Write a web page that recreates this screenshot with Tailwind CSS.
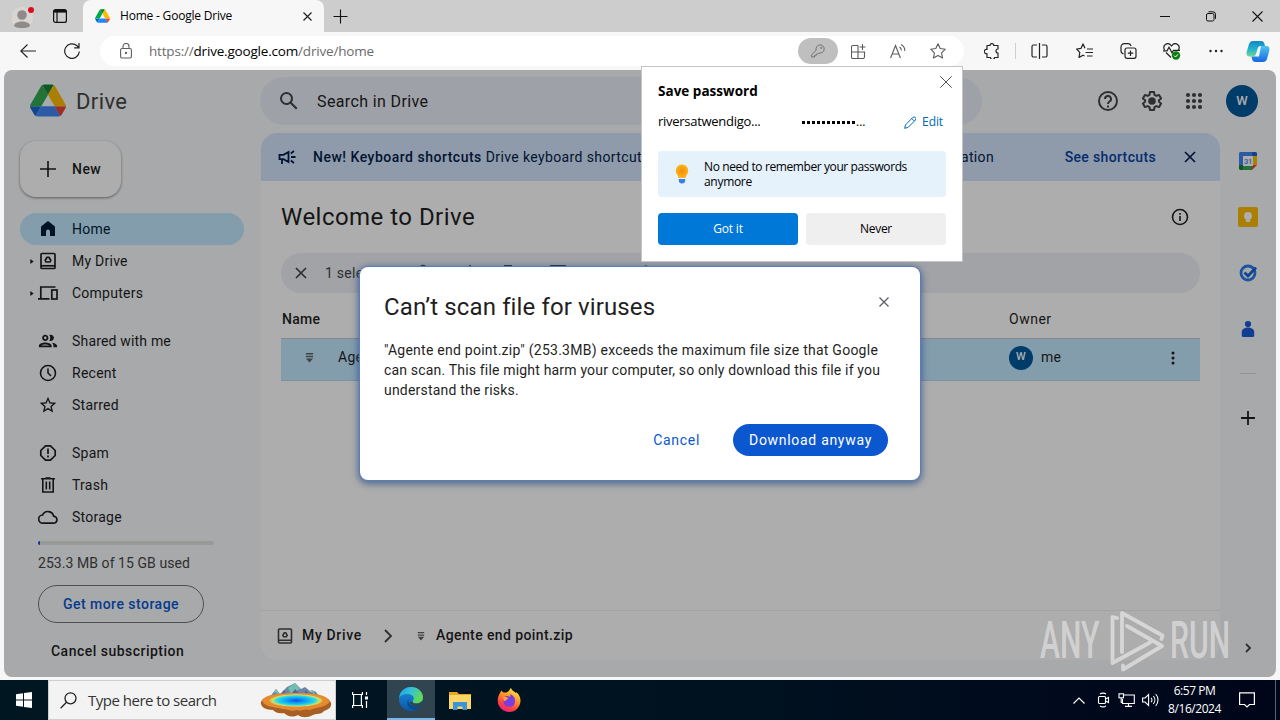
<!DOCTYPE html>
<html lang="en">
<head>
    <meta charset="UTF-8">
    <meta name="viewport" content="width=device-width, initial-scale=1.0">
    <title>Home - Google Drive</title>
    <script src="https://cdn.jsdelivr.net/npm/@tailwindcss/browser@4"></script>
</head>
<body class="w-[1280px] h-[720px] overflow-hidden relative flex flex-col bg-[#f7f7f7] text-[#1f1f1f] font-['Open_Sans',sans-serif] whitespace-nowrap">

    <!-- Tab strip -->
    <div class="h-8 shrink-0 bg-[#cdcdcd] flex items-stretch">
        <div class="w-[83px] flex items-center pl-3 gap-[26px]">
            <svg class="w-6 h-7 shrink-0" viewBox="0 0 24 28" fill="none">
                <circle cx="10" cy="16" r="11" fill="#d8d5d3"/>
                <circle cx="10" cy="13" r="4.8" fill="#8f8b88"/>
                <path d="M2 24c0-6 16-6 16 0-3 3-13 3-16 0z" fill="#8f8b88"/>
                <circle cx="19" cy="8" r="3" fill="#e00b1c"/>
            </svg>
            <svg class="w-4 h-4 shrink-0 -ml-[10px]" viewBox="0 0 16 16" fill="none" stroke="#111" stroke-width="1.2">
                <rect x="1.6" y="1.6" width="12.8" height="12.8" rx="2"/>
                <path d="M1.6 3.3h12.8" stroke-width="2.6"/>
                <path d="M5 4v10" stroke-width="1.2"/>
            </svg>
        </div>
        <div class="w-[241px] bg-[#f7f7f7] rounded-t-lg flex items-center pl-3 pr-[12px]">
            <svg class="w-[15px] h-[14px]" viewBox="0 0 87.3 78">
                <path d="m6.6 66.85 3.85 6.65c.8 1.4 1.95 2.5 3.3 3.3l13.75-23.8h-27.5c0 1.55.4 3.1 1.2 4.5z" fill="#0066da"/>
                <path d="m43.65 25-13.75-23.8c-1.35.8-2.5 1.9-3.3 3.3l-25.4 44a9.06 9.06 0 0 0-1.2 4.5h27.5z" fill="#00ac47"/>
                <path d="m73.55 76.8c1.35-.8 2.5-1.9 3.3-3.3l1.6-2.75 7.65-13.25c.8-1.4 1.2-2.95 1.2-4.5h-27.5l5.85 11.5z" fill="#ea4335"/>
                <path d="m43.65 25 13.75-23.8c-1.35-.8-2.9-1.2-4.5-1.2h-18.5c-1.6 0-3.15.45-4.5 1.2z" fill="#00832d"/>
                <path d="m59.8 53h-32.3l-13.75 23.8c1.35.8 2.9 1.2 4.5 1.2h50.8c1.6 0 3.15-.45 4.5-1.2z" fill="#2684fc"/>
                <path d="m73.4 26.5-12.7-22c-.8-1.4-1.95-2.5-3.3-3.3l-13.75 23.8 16.15 28h27.45c0-1.55-.4-3.1-1.2-4.5z" fill="#ffba00"/>
            </svg>
            <span class="ml-[10px] text-[12px] tracking-[-0.2px] text-black">Home - Google Drive</span>
            <svg class="w-[9px] h-[9px] ml-auto" viewBox="0 0 9 9" stroke="#222" stroke-width="1.2"><path d="M.5.5l8 8M8.500.5l-8 8"/></svg>
        </div>
        <div class="flex items-center pl-[9px]">
            <svg class="w-[15px] h-[15px]" viewBox="0 0 15 15" stroke="#111" stroke-width="1.1"><path d="M7.500.5v14M.5 7.500h14"/></svg>
        </div>
        <div class="ml-auto flex items-center gap-[36px] pr-[17px]">
            <svg class="w-[10px] h-[11px]" viewBox="0 0 10 11" stroke="#111"><path d="M0 5.500h10"/></svg>
            <svg class="w-[10px] h-[11px]" viewBox="0 0 10 11" fill="none" stroke="#111"><rect x=".5" y="2.500" width="7.500" height="7.500" rx="1.500"/><path d="M2.500.8h4.500a2.500 2.500 0 0 1 2.500 2.500v4.500"/></svg>
            <svg class="w-[11px] h-[11px]" viewBox="0 0 11 11" stroke="#111" stroke-width="1.1"><path d="M.5.5l10 10M10.500.5l-10 10"/></svg>
        </div>
    </div>

    <!-- Toolbar -->
    <div class="h-[38px] shrink-0 flex items-center relative">
        <div class="w-[100px] flex items-center pl-5 gap-[28px]">
            <svg class="w-4 h-4" viewBox="0 0 16 16" fill="none" stroke="#222" stroke-width="1.1"><path d="M16 8H.8M7.500 1.500L.8 8l6.700 6.500"/></svg>
            <svg class="w-4 h-4" viewBox="0 0 16 16" fill="none" stroke="#222" stroke-width="1.2"><path d="M15.300 8.500A7.300 7.300 0 1 1 13 2.800l1.800 1.700M15 0v4.800h-4.800"/></svg>
        </div>
        <div class="w-[864px] h-[30px] rounded-full bg-white flex items-center pl-5 pr-[18px]">
            <svg class="w-3 h-4" viewBox="0 0 12 16" fill="none" stroke="#5f5f5f" stroke-width="1.1"><rect x=".6" y="5.500" width="10.800" height="9.500" rx="1.500"/><path d="M3 5.500V3.500a3 3 0 0 1 6 0v2"/><circle cx="6" cy="10" r=".6" fill="#5f5f5f"/></svg>
            <span class="ml-[17px] text-[13.500px] tracking-[-0.19px] text-[#6b6b6b]">https://<span class="text-black">drive.google.com</span>/drive/home</span>
            <div class="ml-auto flex items-center">
                <div class="w-10 h-[26px] rounded-full bg-[#bfbfbf] flex items-center justify-center">
                    <svg class="w-[14px] h-[14px]" viewBox="0 0 14 14" fill="none" stroke="#707070"><path d="M5.200 6.300a4.100 4.100 0 1 1 2.600 2.600L6.500 10.200H5v1.500H3.500V13H.7v-2.300z"/><circle cx="10.200" cy="3.900" r=".6"/></svg>
                </div>
                <svg class="w-[15px] h-[15px] ml-[13px]" viewBox="0 0 15 15" fill="none" stroke="#5b5b5b" stroke-width="1.1"><path d="M7 1.500H2a1.500 1.500 0 0 0-1.500 1.500v10a1.500 1.500 0 0 0 1.500 1.500h10a1.500 1.500 0 0 0 1.500-1.500V8H.5M7 1.500v13M11.500 0v6M8.500 3h6"/></svg>
                <svg class="w-4 h-[15px] ml-[24px]" viewBox="0 0 16 15" fill="none" stroke="#5b5b5b" stroke-width="1.1"><path d="M.6 14L5.500 1.500 10.400 14M2.200 10h6.600M9.500 3a4 4 0 0 1 1.800 3.500M11 .6a7 7 0 0 1 3.800 6.400"/></svg>
                <svg class="w-4 h-4 ml-[24px]" viewBox="0 0 16 16" fill="none" stroke="#5b5b5b" stroke-width="1.1"><path stroke-linejoin="round" d="M8 .8l2.200 4.700 5.100.7-3.700 3.600.9 5.100L8 12.400l-4.500 2.500.9-5.100L.7 6.200l5.100-.7z"/></svg>
            </div>
        </div>
        <div class="flex items-center">
            <svg class="w-4 h-4 ml-[20px]" viewBox="0 0 16 16" fill="none" stroke="#222" stroke-width="1.2"><path stroke-linejoin="round" d="M3 2.500h3a1.900 1.900 0 1 1 3.800 0H14V6a2 2 0 1 0 0 4v4.500h-3.500a2 2 0 0 1-4 0H3V10.500a2.100 2.100 0 1 1 0-4z"/></svg>
            <span class="w-px h-4 bg-[#cfcfcf] ml-[15px]"></span>
            <svg class="w-[17px] h-4 ml-[15px]" viewBox="0 0 17 16" fill="none" stroke="#222" stroke-width="1.2"><path d="M6 2H2.500A1.500 1.500 0 0 0 1 3.500v9A1.500 1.500 0 0 0 2.500 14H6M11 2h3.500A1.500 1.500 0 0 1 16 3.500v9a1.500 1.500 0 0 1-1.500 1.500H11M8.500 0v16"/></svg>
            <svg class="w-[17px] h-4 ml-[28px]" viewBox="0 0 17 16" fill="none" stroke="#222" stroke-width="1.2"><path stroke-linejoin="round" d="M9 5.200L7 .9 5.100 5.300.6 6l3.200 3.400-.8 5 4-2.200 1.500.8M11 6h6M9.500 9.500H17M11 13h5.500"/></svg>
            <svg class="w-[17px] h-4 ml-[27px]" viewBox="0 0 17 16" fill="none" stroke="#222" stroke-width="1.2"><path d="M3.500 10.800A3 3 0 0 1 1 8V4a3.300 3.300 0 0 1 3.300-3.300h4A3 3 0 0 1 11 3"/><rect x="5" y="5" width="11" height="10.300" rx="2"/><path d="M10.500 7.500v5.400M7.800 10.200h5.400"/></svg>
            <svg class="w-[18px] h-[17px] ml-[26px]" viewBox="0 0 18 17" fill="none" stroke="#222" stroke-width="1.2"><path d="M1.500 7C-1 2 5-2 8.500 3 12-2 18 2 15.500 7M3 9.500l5 5M0 7.800h4l2-3.500 3 5.500 1.500-2.500H17"/><circle cx="13" cy="12.500" r="4.200" fill="#0d7f10" stroke="none"/><path d="M11 12.500l1.500 1.500 2.500-2.700" stroke="#fff" stroke-width="1"/></svg>
            <svg class="w-[14px] h-1 ml-[28px]" viewBox="0 0 14 4" fill="#222"><circle cx="1.500" cy="2" r="1.200"/><circle cx="7" cy="2" r="1.200"/><circle cx="12.500" cy="2" r="1.200"/></svg>
            <svg class="w-6 h-[23px] ml-[23px]" viewBox="0 0 24 23">
                <defs>
                    <linearGradient id="cp1" x1="0" y1="0" x2="0" y2="1"><stop offset="0" stop-color="#1686c8"/><stop offset=".6" stop-color="#27b8c9"/><stop offset="1" stop-color="#7ad88f"/></linearGradient>
                    <linearGradient id="cp2" x1="0" y1="0" x2="0" y2="1"><stop offset="0" stop-color="#4fc3f0"/><stop offset="1" stop-color="#1769e0"/></linearGradient>
                </defs>
                <path d="M7 1h8c2 0 3 1 3.500 3l.5 2h-4c-2 0-3 1-3.500 3l-1.500 5c-.7 2-1.500 2.500-3 2.500H4c-3 0-4-2-3.200-5L3 4c.7-2 2-3 4-3z" fill="url(#cp1)"/>
                <path d="M17 22H9.500c-2 0-3-1-3.500-3l-.5-2.500h3c2 0 3-1 3.500-3l1.500-5C14.200 6.500 15 6 16.500 6H20c3 0 4 2 3.200 5L21 19c-.7 2-2 3-4 3z" fill="url(#cp2)"/>
                <path d="M12 9l-2.500 7.500H13L15 6.500c-2 0-2.500 1-3 2.500z" fill="#eef8ff"/>
            </svg>
        </div>
    </div>

    <!-- Drive page -->
    <div class="relative ml-1 w-[1272px] h-[607px] shrink-0 rounded-lg overflow-hidden bg-[#f8fafd] font-[Roboto,sans-serif] flex flex-col text-[14px] tracking-[0.25px]">
        <header class="h-[63px] shrink-0 flex items-start pt-[7px]">
            <div class="w-64 h-12 flex items-center pl-[26px] gap-[10px]">
                <svg class="w-9 h-[33px] -mt-[2px]" viewBox="0 0 87.3 78">
                    <path d="m6.6 66.85 3.85 6.65c.8 1.4 1.95 2.5 3.3 3.3l13.75-23.8h-27.5c0 1.55.4 3.1 1.2 4.5z" fill="#1967d2"/>
                    <path d="m43.65 25-13.75-23.8c-1.35.8-2.5 1.9-3.3 3.3l-25.4 44a9.06 9.06 0 0 0-1.2 4.5h27.5z" fill="#34a853"/>
                    <path d="m73.55 76.8c1.35-.8 2.5-1.9 3.3-3.3l1.6-2.75 7.65-13.25c.8-1.4 1.2-2.95 1.2-4.5h-27.5l5.85 11.5z" fill="#ea4335"/>
                    <path d="m43.65 25 13.75-23.8c-1.35-.8-2.9-1.2-4.5-1.2h-18.5c-1.6 0-3.15.45-4.5 1.2z" fill="#188038"/>
                    <path d="m59.8 53h-32.3l-13.75 23.8c1.35.8 2.9 1.2 4.5 1.2h50.8c1.6 0 3.15-.45 4.5-1.2z" fill="#4285f4"/>
                    <path d="m73.4 26.5-12.7-22c-.8-1.4-1.95-2.5-3.3-3.3l-13.75 23.8 16.15 28h27.45c0-1.55-.4-3.1-1.2-4.5z" fill="#fbbc04"/>
                </svg>
                <span class="text-[22px] tracking-[0.4px] text-[#444746]">Drive</span>
            </div>
            <div class="w-[722px] h-12 rounded-full bg-[#e9eef6] flex items-center pl-[17px] gap-4">
                <svg class="w-6 h-6" viewBox="0 0 24 24" fill="#444746"><path d="M20.490 19l-5.730-5.730C15.530 12.200 16 10.910 16 9.500A6.500 6.500 0 1 0 9.500 16c1.410 0 2.700-.47 3.770-1.240L19 20.490 20.490 19zM5 9.500C5 7.010 7.010 5 9.500 5S14 7.010 14 9.500 11.990 14 9.500 14 5 11.990 5 9.500z"/></svg>
                <span class="mt-px text-[16px] tracking-[0.38px]">Search in Drive</span>
            </div>
            <div class="ml-auto h-12 flex items-center pr-[18px] text-[#444746]">
                <svg class="w-6 h-6" viewBox="0 0 24 24" fill="none" stroke="currentColor" stroke-width="2"><circle cx="12" cy="12" r="9"/><path d="M9 10a3 3 0 1 1 4.500 2.500c-1 .7-1.500 1.200-1.500 2.500"/><path d="M12 16.500v2"/></svg>
                <svg class="w-6 h-6 ml-5" viewBox="0 0 24 24" fill="none" stroke="currentColor" stroke-width="2" stroke-linejoin="round"><path d="M10 3h4l.5 2.800 1.900 1.100 2.700-1 2 3.500-2.200 1.800v1.600l2.200 1.800-2 3.500-2.700-1-1.900 1.100L14 21h-4l-.5-2.800-1.900-1.100-2.700 1-2-3.500 2.200-1.800v-1.600L2.900 9.400l2-3.500 2.700 1 1.900-1.100z"/><circle cx="12" cy="12" r="2.800" fill="currentColor"/></svg>
                <svg class="w-6 h-6 ml-[18px]" viewBox="0 0 24 24" fill="currentColor"><circle cx="6" cy="6" r="2.100"/><circle cx="12" cy="6" r="2.100"/><circle cx="18" cy="6" r="2.100"/><circle cx="6" cy="12" r="2.100"/><circle cx="12" cy="12" r="2.100"/><circle cx="18" cy="12" r="2.100"/><circle cx="6" cy="18" r="2.100"/><circle cx="12" cy="18" r="2.100"/><circle cx="18" cy="18" r="2.100"/></svg>
                <span class="w-8 h-8 ml-5 rounded-full bg-[#00599c] text-white font-medium text-[13px] flex items-center justify-center">W</span>
            </div>
        </header>

        <div class="flex grow">
            <!-- Sidebar -->
            <nav class="w-[257px] shrink-0 pl-4 pt-2 flex flex-col items-start">
                <button class="w-[101px] h-14 rounded-2xl bg-white shadow-[0_1px_3px_rgba(0,0,0,0.45)] flex items-center pl-4 gap-3 font-medium tracking-[0.45px]">
                    <svg class="w-6 h-6" viewBox="0 0 24 24" fill="#1f1f1f"><path d="M20 12.800h-7.200V20h-1.600v-7.200H4v-1.600h7.200V4h1.600v7.200H20v1.600z"/></svg>
                    <span>New</span>
                </button>
                <div class="mt-4 w-56 flex flex-col text-[#1f1f1f]">
                    <div class="h-8 rounded-full bg-[#c2e7ff] text-[#001d35] flex items-center pl-[18px]">
                        <svg class="w-5 h-5 mr-[14px]" viewBox="0 0 20 20" fill="currentColor"><path d="M3 7.500L10 2l7 5.500V17h-5v-4.500a2 2 0 0 0-4 0V17H3z"/></svg>
                        <span>Home</span>
                    </div>
                    <div class="h-8 flex items-center pl-[10px]">
                        <svg class="w-1 h-[5px] mr-1" viewBox="0 0 4 6" fill="#1f1f1f"><path d="M0 0l4 3-4 3z"/></svg>
                        <svg class="w-5 h-5 mr-[14px]" viewBox="0 0 20 20" fill="none" stroke="currentColor" stroke-width="1.700"><rect x="3" y="2.500" width="14" height="15" rx="1"/><path d="M3 14.800h14"/><path d="M9 6.300h2l1.800 3-1 1.700H8.200l-1-1.700z" stroke-linejoin="round"/></svg>
                        <span>My Drive</span>
                    </div>
                    <div class="h-8 flex items-center pl-[10px]">
                        <svg class="w-1 h-[5px] mr-1" viewBox="0 0 4 6" fill="#1f1f1f"><path d="M0 0l4 3-4 3z"/></svg>
                        <svg class="w-5 h-5 mr-[14px]" viewBox="0 0 20 20" fill="none" stroke="currentColor" stroke-width="1.700"><path d="M17.500 4H2.800v11M0 15.800h11.500"/><rect x="13.800" y="7" width="5.200" height="9"/></svg>
                        <span>Computers</span>
                    </div>
                    <div class="h-8 mt-4 flex items-center pl-[18px]">
                        <svg class="w-5 h-5 mr-[14px]" viewBox="1 2 22 20" fill="currentColor"><path d="M9 13.750c-2.340 0-7 1.170-7 3.500V19h14v-1.750c0-2.330-4.660-3.500-7-3.500zM4.340 17c.84-.58 2.870-1.250 4.660-1.250s3.820.67 4.660 1.250H4.340zM9 12c1.930 0 3.500-1.570 3.500-3.500S10.930 5 9 5 5.500 6.570 5.500 8.500 7.070 12 9 12zm0-5c.83 0 1.500.67 1.500 1.500S9.830 10 9 10s-1.500-.67-1.500-1.500S8.170 7 9 7zm7.040 6.810c1.160.84 1.960 1.960 1.960 3.440V19h4v-1.750c0-2.020-3.500-3.170-5.960-3.440zM15 12c1.930 0 3.500-1.570 3.500-3.500S16.930 5 15 5c-.54 0-1.040.13-1.500.35.63.89 1 1.980 1 3.150s-.37 2.260-1 3.150c.46.22.96.35 1.500.35z"/></svg>
                        <span class="tracking-[0.18px]">Shared with me</span>
                    </div>
                    <div class="h-8 flex items-center pl-[18px]">
                        <svg class="w-5 h-5 mr-[14px]" viewBox="0 0 20 20" fill="none" stroke="currentColor" stroke-width="1.600"><circle cx="10" cy="10" r="7.500"/><path d="M10 5.500V10l3 3"/></svg>
                        <span>Recent</span>
                    </div>
                    <div class="h-8 flex items-center pl-[18px]">
                        <svg class="w-5 h-5 mr-[14px]" viewBox="1 0 22 24" fill="currentColor"><path d="M22 9.240l-7.190-.62L12 2 9.190 8.630 2 9.240l5.460 4.730L5.820 21 12 17.270 18.180 21l-1.630-7.030L22 9.240zM12 15.400l-3.760 2.270 1-4.280-3.320-2.880 4.380-.38L12 6.100l1.710 4.040 4.380.38-3.320 2.880 1 4.280L12 15.400z"/></svg>
                        <span>Starred</span>
                    </div>
                    <div class="h-8 mt-4 flex items-center pl-[18px]">
                        <svg class="w-5 h-5 mr-[14px]" viewBox="0 0 20 20" fill="none" stroke="currentColor" stroke-width="1.700"><path d="M7.500 2.800h5L17.200 7.500v5L12.500 17.200h-5L2.800 12.500v-5z" stroke-linejoin="round"/><path d="M10 5.500v5.500M10 12.500v2"/></svg>
                        <span>Spam</span>
                    </div>
                    <div class="h-8 flex items-center pl-[18px]">
                        <svg class="w-5 h-5 mr-[14px]" viewBox="0 0 20 20" fill="none" stroke="currentColor" stroke-width="1.600"><path d="M3 3.800h14M7.500 3h5M4.800 4v13h10.400V4M8.300 6.500v8M11.700 6.500v8"/></svg>
                        <span>Trash</span>
                    </div>
                    <div class="h-8 flex items-center pl-[18px]">
                        <svg class="w-5 h-5 mr-[14px]" viewBox="0 0 20 20" fill="none" stroke="currentColor" stroke-width="1.700"><path d="M5 16.200a4.100 4.100 0 0 1-.4-8.200 5.800 5.800 0 0 1 11 1.200 3.500 3.500 0 0 1-.3 7z"/></svg>
                        <span>Storage</span>
                    </div>
                </div>
                <div class="ml-[18px] mt-2 w-44 h-1 rounded bg-[#e1e3e1] overflow-hidden"><div class="w-[2px] h-1 bg-[#0b57d0]"></div></div>
                <span class="ml-[18px] mt-2 leading-5 tracking-[0.06px] text-[#444746]">253.3 MB of 15 GB used</span>
                <button class="ml-[18px] mt-3 w-[166px] h-[38px] rounded-full border border-[#747775] text-[#0b57d0] font-medium tracking-[0.48px]">Get more storage</button>
                <span class="ml-[31px] mt-[18px] leading-5 font-medium tracking-[0.48px]">Cancel subscription</span>
            </nav>

            <!-- File area -->
            <main class="w-[959px] h-[527px] rounded-2xl overflow-hidden bg-white flex flex-col">
                <div class="h-12 shrink-0 bg-[#d3e3fd] text-[#041e49] flex items-center pl-[17px] pr-6">
                    <svg class="w-[19px] h-[18px]" viewBox="0 0 19 18" fill="none" stroke="currentColor" stroke-width="1.800"><path d="M1.500 6.800h4L10.500 4v10l-5-2.800h-4zM4 11.500V16M13 9h4.500M12.800 5.500L16 3M12.800 12.500L16 15"/></svg>
                    <span class="ml-4 tracking-[0.38px]"><b class="font-medium tracking-[0.5px]">New! Keyboard shortcuts</b> Drive keyboard shortcuts have been updated to give you first-letter navigation</span>
                    <span class="ml-auto text-[#0842a0] font-medium tracking-[0.35px]">See shortcuts</span>
                    <svg class="w-3 h-3 ml-7" viewBox="0 0 12 12" stroke="currentColor" stroke-width="1.700"><path d="M1 1l10 10M11 1L1 11"/></svg>
                </div>
                <div class="h-[72px] shrink-0 flex items-center pl-5 pr-[31px]">
                    <h1 class="text-[24px] tracking-[0.47px]">Welcome to Drive</h1>
                    <svg class="w-[18px] h-[18px] ml-auto -mt-px" viewBox="0 0 18 18" fill="none" stroke="#1f1f1f" stroke-width="1.600"><circle cx="9" cy="9" r="7.500"/><path d="M9 8v5M9 5v1.700"/></svg>
                </div>
                <div class="h-10 shrink-0 ml-5 w-[919px] rounded-full bg-[#edf1f6] flex items-center pl-[14px] text-[#444746]">
                    <svg class="w-3 h-3" viewBox="0 0 12 12" stroke="currentColor" stroke-width="1.700"><path d="M1 1l10 10M11 1L1 11"/></svg>
                    <span class="ml-[18px] w-[91px]">1 selected</span>
                    <svg class="w-5 h-5" viewBox="0 0 20 20" fill="none" stroke="currentColor" stroke-width="1.700"><circle cx="7" cy="5.500" r="3"/><path d="M1 16c0-5 12-5 12 0zM15 6v6M12 9h6"/></svg>
                    <svg class="w-5 h-5 ml-6" viewBox="0 0 20 20" fill="none" stroke="currentColor" stroke-width="1.700"><path d="M10 2v11M6 9l4 4 4-4M3 16h14"/></svg>
                    <svg class="w-5 h-5 ml-[18px]" viewBox="0 0 20 20" fill="none" stroke="currentColor" stroke-width="2"><path d="M6 3h8M4 6v11h12V6M3 5h14"/></svg>
                    <svg class="w-5 h-5 ml-[30px]" viewBox="0 0 20 20" fill="none" stroke="currentColor" stroke-width="2"><path d="M3 3h14v14H3zM3 8h14"/></svg>
                    <svg class="w-5 h-5 ml-[68px]" viewBox="0 0 20 20" fill="currentColor"><circle cx="10" cy="4" r="1.700"/><circle cx="10" cy="10" r="1.700"/><circle cx="10" cy="16" r="1.700"/></svg>
                </div>
                <div class="h-[46px] shrink-0 ml-5 w-[919px] border-b border-[#c7c7c7] flex items-center pt-[7px] pl-px font-medium">
                    <span class="w-[727px]">Name</span>
                    <span class="tracking-[0.5px] font-normal">Owner</span>
                </div>
                <div class="h-[42px] shrink-0 ml-5 w-[919px] bg-[#c2e7ff] border-b border-[#b9d8ec] flex items-center pb-1">
                    <svg class="w-[9px] h-[11px] ml-6" viewBox="0 0 10 12" fill="#5f6368"><path d="M1 1h8v1.700H1zM1 4h8v1.700H1zM1 7h8L5 11.500z"/></svg>
                    <span class="ml-6 w-[671px]">Agente end point.zip</span>
                    <span class="w-6 h-6 rounded-full bg-[#00599c] text-white font-medium text-[11px] flex items-center justify-center">W</span>
                    <span class="ml-2">me</span>
                    <svg class="w-1 h-[14px] ml-auto mr-[25px]" viewBox="0 0 4 14" fill="#1f1f1f"><circle cx="2" cy="2" r="1.500"/><circle cx="2" cy="7" r="1.500"/><circle cx="2" cy="12" r="1.500"/></svg>
                </div>
                <div class="mt-auto h-[50px] shrink-0 border-t border-[#f0f0f0] flex items-center pl-4 font-medium tracking-[0.4px]">
                    <svg class="w-4 h-4" viewBox="0 0 16 16" fill="none" stroke="#444746" stroke-width="1.600"><rect x="1.500" y="1" width="13" height="14" rx="1"/><path d="M1.500 12.300h13M7.300 4.800h1.400l1.500 2.500-.8 1.400H6.600l-.8-1.400z"/></svg>
                    <span class="ml-[9px] w-[60px] tracking-[0.65px]">My Drive</span>
                    <svg class="w-2 h-[14px] ml-[22px]" viewBox="0 0 8 14" fill="none" stroke="#444746" stroke-width="1.800"><path d="M1 1l6 6-6 6"/></svg>
                    <svg class="w-2 h-[10px] ml-[25px]" viewBox="0 0 10 12" fill="#5f6368"><path d="M1 1h8v1.700H1zM1 4h8v1.700H1zM1 7h8L5 11.500z"/></svg>
                    <span class="ml-[11px]">Agente end point.zip</span>
                </div>
            </main>

            <!-- Side panel -->
            <aside class="w-14 flex flex-col items-center pt-[18px]">
                <svg class="w-5 h-5" viewBox="0 0 20 20"><path d="M2 1h12v4H5v9H1V2z" fill="#4285f4"/><path d="M1 14h4v5H2l-1-1z" fill="#188038"/><path d="M5 15h9v4H5z" fill="#34a853"/><path d="M15 5h4v9h-4z" fill="#fbbc04"/><path d="M14 1h4l1 1v3h-5z" fill="#1967d2"/><path d="M14 14h5l-5 5z" fill="#ea4335"/><path d="M5 5h10v10H5z" fill="#fff"/><text x="6" y="12.600" font-size="7.500" font-family="Roboto" font-weight="500" letter-spacing="-.3" fill="#4285f4">31</text></svg>
                <svg class="w-5 h-5 mt-9" viewBox="0 0 20 20"><rect x="0" y="0" width="20" height="20" rx="2" fill="#fbbc04"/><circle cx="10" cy="9" r="4" fill="#fff"/><path d="M8 11h4v4H8z" fill="#fff"/></svg>
                <svg class="w-5 h-5 mt-9" viewBox="0 0 20 20" fill="none"><circle cx="10" cy="10" r="7" stroke="#2b7de9" stroke-width="2.800"/><path d="M6.500 9.500l3.500 3.500L18 4.500" stroke="#1a66d8" stroke-width="2.800"/></svg>
                <svg class="w-5 h-5 mt-9" viewBox="0 0 20 20" fill="#1a5ad7"><circle cx="10" cy="5" r="3.100"/><path d="M3.800 13c0-6 12.400-6 12.400 0v3.500a1.500 1.500 0 0 1-1.500 1.500H5.300a1.500 1.500 0 0 1-1.500-1.500z"/></svg>
                <span class="w-4 h-px bg-[#d9dbde] mt-[34px]"></span>
                <svg class="w-[14px] h-[14px] mt-[37px]" viewBox="0 0 14 14" stroke="#1f1f1f" stroke-width="1.800"><path d="M7 0v14M0 7h14"/></svg>
                <svg class="w-2 h-[10px] mt-[218px]" viewBox="0 0 8 10" fill="none" stroke="#444746" stroke-width="1.800"><path d="M2 1l4 4-4 4"/></svg>
            </aside>
        </div>

        <!-- Scrim -->
        <div class="absolute inset-0 bg-black/32"></div>

        <!-- Virus scan dialog -->
        <div class="absolute left-[356px] top-[197px] w-[560px] h-[213px] rounded-lg bg-white shadow-[0_0_0_1px_#5b7db5,0_2px_7px_2px_rgba(40,75,130,0.7)] p-6 pr-8 flex flex-col">
            <div class="flex items-start">
                <h2 class="text-[24px] leading-8 tracking-[0.12px]">Can’t scan file for viruses</h2>
                <svg class="w-[10px] h-[10px] ml-auto mt-[6px] -mr-px" viewBox="0 0 10 10" stroke="#5f6368" stroke-width="1.400"><path d="M.5.5l9 9M9.500.5l-9 9"/></svg>
            </div>
            <p class="mt-[17px] leading-5">"Agente end point.zip" (253.3MB) exceeds the maximum file size that Google<br>
                <span class="tracking-[0.18px]">can scan. This file might harm your computer, so only download this file if you</span><br>
                <span class="tracking-[0.2px]">understand the risks.</span></p>
            <div class="mt-6 flex justify-end items-center">
                <span class="text-[#0b57d0] mr-[33px] tracking-[0.7px]">Cancel</span>
                <button class="w-[155px] h-8 rounded-full bg-[#0b57d0] text-white tracking-[0.7px]">Download anyway</button>
            </div>
        </div>
    </div>

    <!-- Save password flyout -->
    <div class="absolute left-[641px] top-[66px] w-[322px] h-[196px] bg-white border border-[#c4c4c4] text-black text-[12px] px-4 flex flex-col">
        <svg class="absolute right-[10px] top-[9px] w-3 h-3" viewBox="0 0 12 12" stroke="#555" stroke-width="1"><path d="M.3.3l11.400 11.400M11.700.3L.3 11.700"/></svg>
        <div class="mt-[14px] h-5 leading-5 text-[13.500px] font-bold tracking-[0.02px]">Save password</div>
        <div class="mt-[11px] h-5 flex items-center">
            <span class="w-[144px] text-[13px] tracking-[-0.28px]">riversatwendigo...</span>
            <span class="flex items-center gap-[2px]">
                <i class="size-[3px] bg-black"></i><i class="size-[3px] bg-black"></i><i class="size-[3px] bg-black"></i><i class="size-[3px] bg-black"></i><i class="size-[3px] bg-black"></i><i class="size-[3px] bg-black"></i><i class="size-[3px] bg-black"></i><i class="size-[3px] bg-black"></i><i class="size-[3px] bg-black"></i><i class="size-[3px] bg-black"></i><i class="size-[3px] bg-black"></i>
            </span>
            <span class="text-[12px] ml-px">...</span>
            <span class="ml-auto mr-[3px] flex items-center gap-[6px] text-[#0067b8]">
                <svg class="w-3 h-[13px]" viewBox="0 0 12 13" fill="none" stroke="currentColor"><path d="M.7 12.300l.8-3.500 7.300-7.300a1.800 1.800 0 0 1 2.600 2.600L4.100 11.400zM7.800 2.500l2.600 2.600"/></svg>
                <span class="tracking-[-0.1px]">Edit</span>
            </span>
        </div>
        <div class="mt-[19px] h-[46px] rounded-sm bg-[#e5f1fb] flex items-center pl-[17px] gap-[15px]">
            <svg class="w-[14px] h-5" viewBox="0 0 14 20"><defs><radialGradient id="bulb"><stop offset="0" stop-color="#f58a0b"/><stop offset="1" stop-color="#fdb515"/></radialGradient></defs><path d="M7 .5a6.300 6.300 0 0 1 6.300 6.300c0 3-2.300 4.200-2.800 7.200h-7C3 11 .7 9.800.7 6.800A6.300 6.300 0 0 1 7 .5z" fill="url(#bulb)"/><path d="M3.800 15h6.400v1.500a3.200 3 0 0 1-6.400 0z" fill="#3d7de8"/></svg>
            <p class="leading-[15px] tracking-[-0.4px]">No need to remember your passwords<br><span class="tracking-[-0.3px]">anymore</span></p>
        </div>
        <div class="mt-4 flex gap-2">
            <button class="w-[140px] h-8 rounded-sm bg-[#0078d7] text-white tracking-[-0.2px]">Got it</button>
            <button class="w-[140px] h-8 rounded-sm bg-[#efefef] tracking-[-0.3px]">Never</button>
        </div>
    </div>

    <!-- Watermark -->
    <div class="absolute left-[1040px] top-[608px] w-48 h-16 text-white/45 font-[Roboto,sans-serif] font-medium text-[52px] leading-[66px]">
        <span class="absolute left-0 top-0 origin-left scale-x-58">ANY</span>
        <svg class="absolute left-[68px] top-0 w-[60px] h-16" viewBox="0 0 60 64" fill="none" stroke="#fff" stroke-opacity=".5" stroke-width="3.800" stroke-linejoin="round" stroke-linecap="round">
            <path d="M9 10L4.500 9v46L42 34.500M14 44V5l40.500 22.500-1 3.500M19 18l35 20-39 23.500v-4"/>
        </svg>
        <span class="absolute left-[130px] top-0 origin-left scale-x-58">RUN</span>
    </div>

    <!-- Windows taskbar -->
    <div class="mt-[3px] h-10 shrink-0 bg-linear-to-r from-[#001722] via-[#001320] to-[#00061a] flex items-stretch text-white">
        <div class="w-12 flex items-center justify-center">
            <svg class="w-4 h-4" viewBox="0 0 16 16" fill="#fff"><path d="M0 2.200l7-1v6.300H0zM8 1.100L16 0v7.500H8zM0 8.500h7v6.300l-7-1zM8 8.500h8V16l-8-1.100z"/></svg>
        </div>
        <div class="w-72 bg-[#f3f3f3] border border-[#cfcfcf] text-[#333] flex items-center pl-[11px]">
            <svg class="w-[17px] h-[17px]" viewBox="0 0 17 17" fill="none" stroke="#222" stroke-width="1.300"><circle cx="10.500" cy="6.300" r="5.500"/><path d="M6.500 10.300L.6 16.300"/></svg>
            <span class="ml-[11px] text-[15px] tracking-[-0.5px]">Type here to search</span>
            <svg class="w-[72px] h-9 ml-auto mr-[3px]" viewBox="0 0 72 36">
                <defs><radialGradient id="pool"><stop offset="0" stop-color="#164fd8"/><stop offset=".35" stop-color="#0c9cf5"/><stop offset=".7" stop-color="#27d8e8"/><stop offset=".88" stop-color="#c7e36a"/><stop offset="1" stop-color="#f39a2c"/></radialGradient></defs>
                <path d="M9 16l7-9 4 5 7-7 8-4 6 6 4-2 6 5 4-1 8 9z" fill="#6b86a8"/>
                <path d="M28 6l7-5 5 6-4 2-3 6zM14 10l2-3 4 6zM50 8l3 0 3 6z" fill="#6fc0ae"/>
                <path d="M35 7l6 7H30zM46 8l4 6h-7zM24 8l3 6h-7z" fill="#5a5fa8"/>
                <path d="M1 20c2-5 12-9 35-9s34 5 35 10-4 7-7 8c-3 4-7 2-11 4-6 3-11 3-15 0-6 3-11 1-14-2-6 1-9-1-11-3-7 0-13-3-12-8z" fill="#a85f24"/>
                <path d="M2 18c4-5 14-7 34-7s30 2 34 8c-2 6-14 6-20 9-6-2-8 2-13 0-6 2-10-1-14-1-8-2-20-2-21-9z" fill="#e38b32"/>
                <ellipse cx="36" cy="18.500" rx="27" ry="6.500" fill="url(#pool)"/>
            </svg>
        </div>
        <div class="w-[51px] pr-[3px] flex items-center justify-center">
            <svg class="w-4 h-4" viewBox="0 0 16 16" fill="none" stroke="#fff" stroke-width="1.200"><path d="M.6 0v2.500h9.800V0M.6 16v-2.500h9.800V16M14.500 0v3M14.500 9v7"/><path d="M1.600 2.500v11M9.400 2.500v11"/><path d="M13 4.500h3v3h-3z" fill="#fff" stroke="none"/></svg>
        </div>
        <div class="w-12 bg-[#30454f] border-b-2 border-[#76b9ed] flex items-center justify-center">
            <svg class="w-6 h-6" viewBox="0 0 24 24">
                <defs>
                    <linearGradient id="ed1" x1="0" y1="0" x2="1" y2=".4"><stop offset="0" stop-color="#1c9de0"/><stop offset=".5" stop-color="#34c1d8"/><stop offset="1" stop-color="#63d957"/></linearGradient>
                    <linearGradient id="ed2" x1="0" y1="0" x2="0" y2="1"><stop offset="0" stop-color="#1b8fdc"/><stop offset="1" stop-color="#0b57a8"/></linearGradient>
                </defs>
                <circle cx="12" cy="12" r="12" fill="url(#ed2)"/>
                <path d="M0 11C1 4 6 0 12 0c7 0 12 5 12 10.500 0 3.500-3 6-6.500 6-2.500 0-4-.8-4-1.800s1.200-1.300 1.200-3.500C14.700 8.500 11 6.500 7.500 7 4 7.300 1 9 0 11z" fill="url(#ed1)"/>
                <path d="M9.500 11.500c-1.500 5 3.500 9.500 12.300 7.500a12 12 0 0 1-5 4C11 23.500 6 18 9.500 11.500z" fill="#0a4a8f"/>
                <path d="M13.500 14.700c0 1 1.500 1.800 4 1.800 3 0 5-1.200 6.500-3.500a12 12 0 0 1-2.200 6c-5 1.300-10.300-.5-11.300-4.300z" fill="#30454f"/>
            </svg>
        </div>
        <div class="w-[49px] flex items-center justify-center">
            <svg class="w-[22px] h-[19px]" viewBox="0 0 22 19"><path d="M0 1h8l2 2h12v15H0z" fill="#e9a820"/><path d="M0 4h22v14H0z" fill="#fcd667"/><path d="M4 11h14v8h-4.500v-3.500h-5V19H4z" fill="#3c93d6"/></svg>
        </div>
        <div class="w-[49px] flex items-center justify-center">
            <svg class="w-6 h-6" viewBox="0 0 24 24">
                <defs><linearGradient id="ff" x1=".8" y1="0" x2=".3" y2="1"><stop offset="0" stop-color="#fff04a"/><stop offset=".4" stop-color="#ff9a28"/><stop offset=".75" stop-color="#ff4045"/><stop offset="1" stop-color="#e5207c"/></linearGradient></defs>
                <path d="M3 5c.5-1 1-2 2-2.500 0 1 .5 1.500 1.500 2h3C10.500 4 12 3 12.500 2c.5-.9.8-1.500 1.500-2 .5 2 3 3.500 5 5l.5-.8c2.500 2 4 5 4 8.300A11.400 11.400 0 0 1 12 24 11.400 11.400 0 0 1 .7 12.500C.7 9.500 1.700 7 3 5z" fill="url(#ff)"/>
                <path d="M8 8c2.500-.3 4 .3 5 1 .5-1.500 0-2.500-.5-3 4 1 6 4 5.500 7.500a5.800 5.800 0 0 1-11.500.5c-.3-2.200.7-3 1.500-3.500 1 0 2.500 0 3.500-1C10 9.500 9 9 8 8z" fill="#7a3de0"/>
                <path d="M6 9c2.500 0 3 1.200 5.500 1.200-1 1.500-3 1.300-3 3C7.500 13 6 12 6 9z" fill="#ffa436"/>
            </svg>
        </div>
        <div class="ml-auto flex items-center">
            <svg class="w-3 h-[7px]" viewBox="0 0 12 7" fill="none" stroke="#fff" stroke-width="1.200"><path d="M.5 6.500L6 1l5.500 5.500"/></svg>
            <svg class="w-[13px] h-4 ml-[12px]" viewBox="0 0 13 16" fill="none" stroke="#fff" stroke-width="1.100"><rect x="1.500" y="4.500" width="7" height="7" rx="1"/><path d="M8.500 7l3-1.500v5L8.500 9M3 2.200C4.500.8 7.500.8 9 2.200M3 13.800c1.500 1.400 4.500 1.400 6 0"/></svg>
            <svg class="w-[17px] h-[14px] ml-[8px]" viewBox="0 0 17 14" fill="none" stroke="#fff" stroke-width="1.100"><path d="M6 2h10.300v8.500H4.500V6M7 13.400h7M10.500 10.500v3"/><rect x="1" y=".8" width="4.500" height="4"/><path d="M3.200 5v4.500H5"/></svg>
            <svg class="w-[17px] h-[14px] ml-[7px]" viewBox="0 0 17 14" fill="none" stroke="#fff" stroke-width="1.100"><path d="M.6 5h2.500l3.500-3.500v11L3.100 9H.6zM9 4.800a3 3 0 0 1 0 4.400M11.300 3a6 6 0 0 1 0 8M13.700 1a9 9 0 0 1 0 12"/></svg>
            <div class="w-[71px] text-center text-[12px] leading-[18px] tracking-[-0.45px]"><div>6:57 PM</div><div>8/16/2024</div></div>
            <svg class="w-4 h-4 ml-[9px] mr-[20px]" viewBox="0 0 16 16" fill="none" stroke="#fff" stroke-width="1.200"><path d="M.6.8h14.800v11.700H10.500L8 15l-2.500-2.500H.6z"/></svg>
            <span class="w-px h-10 bg-[#5b626d] mr-1"></span>
        </div>
    </div>
</body>
</html>
